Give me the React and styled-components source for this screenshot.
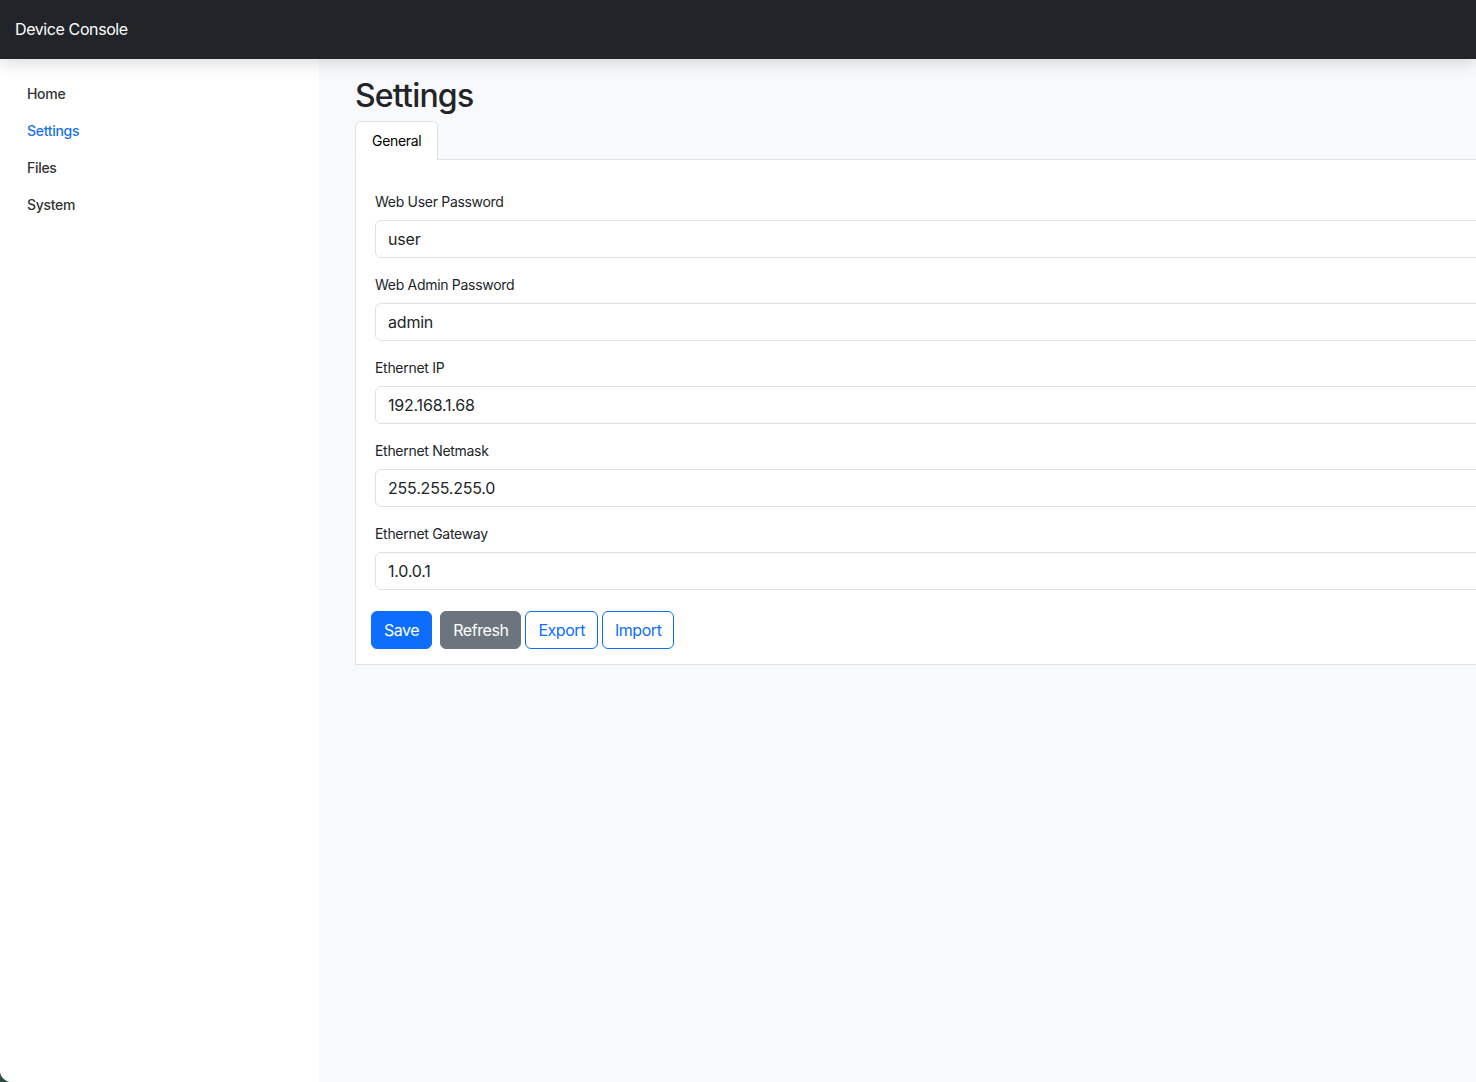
import React from "react";
import styled, { createGlobalStyle } from "styled-components";

const GlobalStyle = createGlobalStyle`
  html, body {
    margin: 0;
    padding: 0;
    background: #2f4d43;
  }
  body {
    font-family: Inter, "Noto Sans", "Liberation Sans", sans-serif;
    color: #212529;
    letter-spacing: -0.3px;
    overflow: hidden;
  }
  * { box-sizing: border-box; }
`;

const fields = [
  { label: "Web User Password", value: "user" },
  { label: "Web Admin Password", value: "admin" },
  { label: "Ethernet IP", value: "192.168.1.68" },
  { label: "Ethernet Netmask", value: "255.255.255.0" },
  { label: "Ethernet Gateway", value: "1.0.0.1" },
];

const navItems = ["Home", "Settings", "Files", "System"];

export default function App() {
  return (
    <>
      <GlobalStyle />
      <S.Window>
        <S.Navbar>
          <S.Brand>Device Console</S.Brand>
        </S.Navbar>
        <S.Body>
          <S.Sidebar>
            {navItems.map((item) => (
              <S.NavLink key={item} $active={item === "Settings"}>
                {item}
              </S.NavLink>
            ))}
          </S.Sidebar>
          <S.Main>
            <S.Title>Settings</S.Title>
            <S.Tabs>
              <S.Tab>General</S.Tab>
            </S.Tabs>
            <S.Card>
              {fields.map((f) => (
                <S.Group key={f.label}>
                  <S.Label>{f.label}</S.Label>
                  <S.Input defaultValue={f.value} />
                </S.Group>
              ))}
              <S.Actions>
                <S.Button $variant="primary">Save</S.Button>
                <S.Button $variant="secondary">Refresh</S.Button>
                <S.Button $variant="outline">Export</S.Button>
                <S.Button $variant="outline">Import</S.Button>
              </S.Actions>
            </S.Card>
          </S.Main>
        </S.Body>
      </S.Window>
    </>
  );
}

const buttonColors = {
  primary: "background: #0d6efd; border-color: #0d6efd; color: #fff;",
  secondary: "background: #6c757d; border-color: #6c757d; color: #fff; margin-left: 4px;",
  outline: "background: #fff; border-color: #0d6efd; color: #0d6efd;",
};

const S = {
  Window: styled.div`
    width: 100vw;
    height: 100vh;
    display: flex;
    flex-direction: column;
    background: #f8f9fa;
    border-bottom-left-radius: 12px;
    overflow: hidden;
  `,
  Navbar: styled.header`
    position: relative;
    z-index: 2;
    height: 59px;
    flex-shrink: 0;
    display: flex;
    align-items: center;
    padding: 0 15px;
    background: #212529;
    box-shadow: 0 6px 14px rgba(0, 0, 0, 0.12);
  `,
  Brand: styled.span`
    color: #fff;
    font-size: 16px;
    font-weight: 400;
    letter-spacing: -0.4px;
    margin-top: -2px;
  `,
  Body: styled.div`
    flex: 1;
    display: flex;
    min-height: 0;
  `,
  Sidebar: styled.nav`
    width: 319px;
    flex-shrink: 0;
    background: #fff;
    display: flex;
    flex-direction: column;
    padding: 24px 0 0 27px;
    gap: 16px;
  `,
  NavLink: styled.a`
    font-size: 14px;
    line-height: 21px;
    font-weight: 500;
    color: ${(p) => (p.$active ? "#1a73e8" : "#333")};
    text-decoration: none;
    cursor: pointer;
  `,
  Main: styled.main`
    flex-shrink: 0;
    width: 1400px;
    padding: 18px 0 0 36px;
  `,
  Title: styled.h2`
    margin: 0 0 6px;
    font-size: 32px;
    line-height: 38px;
    font-weight: 500;
    letter-spacing: -0.8px;
    color: #212529;
  `,
  Tabs: styled.div`
    display: flex;
    border-bottom: 1px solid #dee2e6;
  `,
  Tab: styled.div`
    margin-bottom: -1px;
    padding: 8px 16px;
    font-size: 14px;
    line-height: 21px;
    color: #000;
    background: #fff;
    border: 1px solid #dee2e6;
    border-bottom-color: #fff;
    border-radius: 6px 6px 0 0;
  `,
  Card: styled.section`
    background: #fff;
    border: 1px solid #dee2e6;
    border-top: none;
    padding: 31px 0 15px 19px;
    display: flex;
    flex-direction: column;
    gap: 16px;
  `,
  Group: styled.div`
    display: flex;
    flex-direction: column;
    gap: 8px;
  `,
  Label: styled.label`
    font-size: 14px;
    line-height: 21px;
    color: #212529;
  `,
  Input: styled.input`
    height: 38px;
    padding: 6px 12px;
    font-family: inherit;
    font-size: 16px;
    letter-spacing: -0.2px;
    color: #212529;
    background: #fff;
    border: 1px solid #dee2e6;
    border-radius: 6px;
    outline: none;
  `,
  Actions: styled.div`
    display: flex;
    gap: 4px;
    margin: 5px 0 0 -4px;
  `,
  Button: styled.button`
    height: 38px;
    padding: 6px 12px;
    font-family: inherit;
    font-size: 16px;
    line-height: 24px;
    letter-spacing: -0.45px;
    border: 1px solid;
    border-radius: 6px;
    cursor: pointer;
    ${(p) => buttonColors[p.$variant]}
  `,
};
